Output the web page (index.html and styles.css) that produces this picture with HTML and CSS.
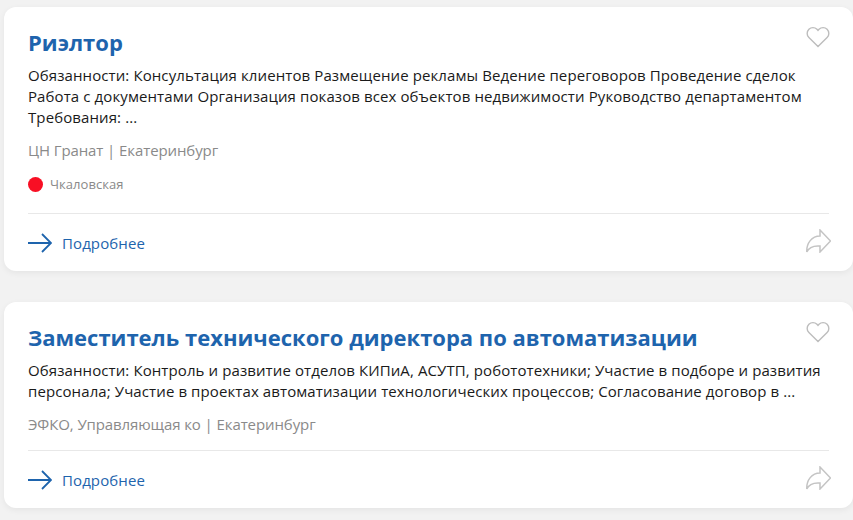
FILE: index.html
```html
<!DOCTYPE html>
<html lang="ru">
<head>
<meta charset="utf-8">
<title>Вакансии</title>
<link rel="stylesheet" href="styles.css">
</head>
<body>
<main class="list">
  <article class="card">
    <svg class="heart" viewBox="0 0 24 22" width="24" height="22"><path d="M12 20.6 2.9 11.6C.6 9.300.6 5.600 2.900 3.300 5.100 1.100 8.700 1.100 11 3.300L12 4.400 13 3.300C15.300 1.100 18.900 1.100 21.100 3.300 23.400 5.600 23.400 9.300 21.100 11.600Z"/></svg>
    <h2 class="title">Риэлтор</h2>
    <p class="desc">Обязанности: Консультация клиентов Размещение рекламы Ведение переговоров Проведение сделок Работа с документами Организация показов всех объектов недвижимости Руководство департаментом Требования: ...</p>
    <p class="company">ЦН Гранат | Екатеринбург</p>
    <div class="metro"><span class="dot"></span>Чкаловская</div>
    <footer class="foot">
      <a class="more" href="#">
        <svg viewBox="0 0 24 20" width="24" height="20"><path d="M0 10H23M14 1l9 9-9 9"/></svg>
        Подробнее
      </a>
      <svg class="share" viewBox="0 0 25 24" width="25" height="24"><path d="M14 1 24.500 12 14 23V17C8 16.500 3 18 .8 23 .3 14 6 7 14 7Z"/></svg>
    </footer>
  </article>
  <article class="card">
    <svg class="heart" viewBox="0 0 24 22" width="24" height="22"><path d="M12 20.6 2.9 11.6C.6 9.300.6 5.600 2.900 3.300 5.100 1.100 8.700 1.100 11 3.300L12 4.400 13 3.300C15.300 1.100 18.900 1.100 21.100 3.300 23.400 5.600 23.400 9.300 21.100 11.600Z"/></svg>
    <h2 class="title">Заместитель технического директора по автоматизации</h2>
    <p class="desc">Обязанности: Контроль и развитие отделов КИПиА, АСУТП, робототехники; Участие в подборе и развития персонала; Участие в проектах автоматизации технологических процессов; Согласование договор в ...</p>
    <p class="company">ЭФКО, Управляющая ко | Екатеринбург</p>
    <footer class="foot">
      <a class="more" href="#">
        <svg viewBox="0 0 24 20" width="24" height="20"><path d="M0 10H23M14 1l9 9-9 9"/></svg>
        Подробнее
      </a>
      <svg class="share" viewBox="0 0 25 24" width="25" height="24"><path d="M14 1 24.500 12 14 23V17C8 16.500 3 18 .8 23 .3 14 6 7 14 7Z"/></svg>
    </footer>
  </article>
</main>
</body>
</html>
```
FILE: styles.css
```css
* { box-sizing: border-box; }
html, body { margin: 0; height: 520px; overflow: hidden; }
body { background: #f2f2f2; font-family: "Open Sans", "Noto Sans", sans-serif; color: #1a1a1a; }
.list { display: flex; flex-direction: column; gap: 31px; padding: 7px 0 0 4px; }
.card { position: relative; background: #fff; border-radius: 12px; padding: 17px 24px 0; box-shadow: 0 2px 6px rgba(0,0,0,.06); }
.heart { position: absolute; top: 19px; right: 23px; fill: none; stroke: #bdbdbd; stroke-width: 1.4; }
.title { margin: 0; font-size: 22px; line-height: 36px; font-weight: 700; color: #1e64ad; }
.desc { margin: 5px 0 0; font-size: 15px; line-height: 21px; letter-spacing: .1px; max-width: 800px; }
.company { margin: 12px 0 0; font-size: 15px; line-height: 21px; letter-spacing: -.1px; color: #8a8a8a; }
.metro { display: flex; align-items: center; gap: 7px; margin-top: 13px; padding-bottom: 4px; font-size: 13px; line-height: 20px; letter-spacing: .05px; color: #8a8a8a; }
.dot { width: 15px; height: 15px; border-radius: 50%; background: #f80f24; }
.foot { display: flex; justify-content: space-between; align-items: center; margin-top: 15px; height: 58px; padding-top: 1px; border-top: 1px solid #e8e8e8; }
.more { display: flex; align-items: center; gap: 10px; font-size: 15px; letter-spacing: .1px; color: #1e64ad; text-decoration: none; }
.more svg { fill: none; stroke: #1e64ad; stroke-width: 1.8; }
.share { margin: 0 -1.5px 4px 0; fill: none; stroke: #c4c4c4; stroke-width: 1.5; }
```
